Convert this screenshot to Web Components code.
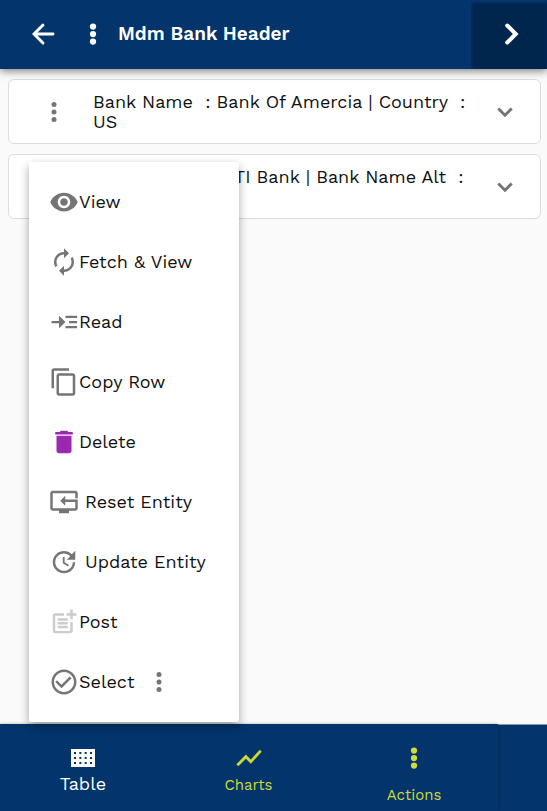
<!DOCTYPE html>
<html lang="en">
<head>
<meta charset="utf-8">
<meta name="viewport" content="width=device-width, initial-scale=1">
<title>Mdm Bank Header</title>
<style>
  html, body { margin: 0; }
  body { font-family: "Work Sans", Inter, "Noto Sans", sans-serif; font-size: 18px; font-weight: 400; line-height: 20px; color: #111; background: #fafafa; }
</style>
</head>
<body>
<bank-app></bank-app>
<script>
const icons = {
  dots: '<circle cx="12" cy="6" r="2"/><circle cx="12" cy="12" r="2"/><circle cx="12" cy="18" r="2"/>',
  boldDots: '<circle cx="12" cy="6" r="2.5"/><circle cx="12" cy="12" r="2.5"/><circle cx="12" cy="18" r="2.5"/>',
  back: '<path d="M20 12H5M12 4.8 4.8 12l7.2 7.2" fill="none" stroke="currentColor" stroke-width="2.3" stroke-linecap="round"/>',
  next: '<path d="M8.2 5.2 15 12l-6.8 6.8" fill="none" stroke="currentColor" stroke-width="3.2" stroke-linecap="round"/>',
  expand: '<path d="M16.59 8.3 12 12.9 7.41 8.3 5.8 9.9l6.2 6.2 6.2-6.2z"/>',
  view: '<path d="M12 4.5C7 4.5 2.73 7.61 1 12c1.73 4.39 6 7.5 11 7.5s9.27-3.11 11-7.5c-1.73-4.39-6-7.5-11-7.5zM12 17c-2.76 0-5-2.24-5-5s2.24-5 5-5 5 2.24 5 5-2.24 5-5 5zm0-8c-1.66 0-3 1.34-3 3s1.34 3 3 3 3-1.34 3-3-1.34-3-3-3z"/>',
  fetch: '<path d="M12 6v3l4-4-4-4v3c-4.42 0-8 3.58-8 8 0 1.57.46 3.03 1.24 4.26L6.7 14.8c-.45-.83-.7-1.79-.7-2.8 0-3.31 2.69-6 6-6zm6.76 1.74L17.3 9.2c.44.84.7 1.79.7 2.8 0 3.31-2.69 6-6 6v-3l-4 4 4 4v-3c4.42 0 8-3.58 8-8 0-1.57-.46-3.03-1.24-4.26z"/>',
  read: '<path d="M2 11.1h6V7l5.2 5L8 17v-4.1H2zM13.2 7H22.5v1.8h-9.3zM16 11.1h6.5v1.8H16zM13.2 15.2h9.3V17h-9.3z"/>',
  copy: '<path d="M16 1H4c-1.1 0-2 .9-2 2v14h2V3h12V1zm3 4H8c-1.1 0-2 .9-2 2v14c0 1.1.9 2 2 2h11c1.1 0 2-.9 2-2V7c0-1.1-.9-2-2-2zm0 16H8V7h11v14z"/>',
  delete: '<path d="M6 19c0 1.1.9 2 2 2h8c1.1 0 2-.9 2-2V7H6v12zM19 4h-3.5l-1-1h-5l-1 1H5v2h14V4z"/>',
  reset: '<path d="M21 9h2V5c0-1.1-.9-2-2-2H3c-1.1 0-2 .9-2 2v12c0 1.1.9 2 2 2h5v2h8v-2h5c1.1 0 2-.9 2-2v-7H13V7l-4 4 4 4v-3h8v5H3V5h18z"/>',
  update: '<path d="M21 10.12h-6.78l2.74-2.82c-2.73-2.7-7.15-2.8-9.88-.1-2.73 2.71-2.73 7.08 0 9.79s7.15 2.71 9.88 0C18.32 15.65 19 14.08 19 12.1h2c0 1.98-.88 4.55-2.64 6.29-3.51 3.48-9.21 3.48-12.72 0-3.5-3.47-3.53-9.11-.02-12.58s9.14-3.47 12.65 0L21 3v7.12zM12.5 8v4.25l3.5 2.08-.72 1.21L11 13V8h1.5z"/>',
  post: '<path d="M17 19.22H5V7h7V5H5c-1.1 0-2 .9-2 2v12c0 1.1.9 2 2 2h12c1.1 0 2-.9 2-2v-7h-2v7.22zM19 2h-2v3h-3v2h3v2.99h2V7h3V5h-3zM7 9h8v2H7zM7 12h8v2H7zM7 15h8v2H7z"/>',
  select: '<path d="M16.59 7.58 10 14.17l-3.59-3.58L5 12l5 5 8-8zM12 2C6.48 2 2 6.48 2 12s4.48 10 10 10 10-4.48 10-10S17.52 2 12 2zm0 18c-4.42 0-8-3.58-8-8s3.58-8 8-8 8 3.58 8 8-3.58 8-8 8z"/>',
  table: '<path fill-rule="evenodd" d="M2.4 4.8h19.2v14.4H2.4zM4.8 7.2v1.6h1.6V7.2zm4.27 0v1.6h1.6V7.2zm4.27 0v1.6h1.6V7.2zm4.26 0v1.6h1.6V7.2zM4.8 11.2v1.6h1.6v-1.6zm4.27 0v1.6h1.6v-1.6zm4.27 0v1.6h1.6v-1.6zm4.26 0v1.6h1.6v-1.6zM4.8 15.2v1.6h1.6v-1.6zm4.27 0v1.6h1.6v-1.6zm4.27 0v1.6h1.6v-1.6zm4.26 0v1.6h1.6v-1.6z"/>',
  charts: '<path d="m3.5 18.49 6-6.01 4 4L22 6.92l-1.41-1.41-7.09 7.97-4-4L2 16.99z" stroke="currentColor" stroke-width=".3"/>'
};
const define = (name, html, setup) => customElements.define(name, class extends HTMLElement {
  constructor() {
    super();
    const t = document.createElement('template');
    t.innerHTML = html;
    this.attachShadow({ mode: 'open' }).append(t.content.cloneNode(true));
  }
  connectedCallback() { if (setup) setup(this, this.shadowRoot); }
});
const buttonReset = 'button{font:inherit;color:inherit;background:none;border:0;padding:0;margin:0;cursor:pointer}';

define('app-icon', `<style>
  :host { display: block; flex: none; width: 30px; height: 30px; }
  svg { display: block; width: 100%; height: 100%; fill: currentColor; }
</style><svg viewBox="0 0 24 24" aria-hidden="true"></svg>`,
  (el, root) => { root.querySelector('svg').innerHTML = icons[el.getAttribute('name')]; });

define('app-header', `<style>${buttonReset}
  :host { display: flex; align-items: stretch; height: 69px; background: #03346b; color: #fff; box-shadow: 0 2px 8px rgba(0,0,0,.5); position: relative; z-index: 1; }
  .main { flex: 1; display: flex; align-items: center; gap: 20px; padding: 0 0 2px 28px; }
  h1 { margin: 0 0 0 -10px; font-size: 19px; line-height: 24px; font-weight: 600; }
  .next { width: 76px; display: grid; place-items: center; background: #01264d; box-shadow: inset 1px 1px 3px #03346b; margin-top: 2px; }
  .next app-icon { margin: 0 0 4px 6px; }
</style>
<div class="main">
  <button aria-label="Back"><app-icon name="back"></app-icon></button>
  <button aria-label="More"><app-icon name="boldDots"></app-icon></button>
  <h1><slot></slot></h1>
</div>
<button class="next" aria-label="Next"><app-icon name="next"></app-icon></button>`);

define('record-card', `<style>${buttonReset}
  :host { display: flex; align-items: center; box-sizing: border-box; min-height: 65px; padding: 11px 20px 11px 30px; background: #fff; border: 1px solid #dcdcdc; border-radius: 6px; }
  .more, .expand { color: #757575; }
  .text { flex: 1; align-self: flex-start; padding: 1px 12px 0 24px; white-space: pre-wrap; }
</style>
<button class="more" aria-label="Row actions"><app-icon name="dots"></app-icon></button>
<div class="text"><slot></slot></div>
<button class="expand" aria-label="Expand"><app-icon name="expand"></app-icon></button>`);

define('menu-item', `<style>${buttonReset}
  :host { display: flex; align-items: center; height: 60px; padding-left: 20px; }
  button { display: flex; align-items: center; text-align: left; }
  app-icon { color: #757575; }
  :host([tone=accent]) app-icon { color: #9c27b0; }
  :host([tone=muted]) app-icon { color: #ccc; }
  :host([spaced]) span { padding-left: 6px; }
</style><button><app-icon></app-icon><span><slot></slot></span></button><slot name="extra"></slot>`,
  (el, root) => {
    const icon = document.createElement('app-icon');
    icon.setAttribute('name', el.getAttribute('icon'));
    root.querySelector('app-icon').replaceWith(icon);
  });

define('action-menu', `<style>
  :host { display: block; box-sizing: border-box; width: 210px; padding: 10px 0; background: #fff; border-radius: 2px; box-shadow: 0 4px 10px rgba(0,0,0,.35); }
  .more { border: 0; padding: 0; margin-left: 10px; background: none; color: #757575; }
</style>
<menu-item icon="view">View</menu-item>
<menu-item icon="fetch">Fetch &amp; View</menu-item>
<menu-item icon="read">Read</menu-item>
<menu-item icon="copy">Copy Row</menu-item>
<menu-item icon="delete" tone="accent">Delete</menu-item>
<menu-item icon="reset" spaced>Reset Entity</menu-item>
<menu-item icon="update" spaced>Update Entity</menu-item>
<menu-item icon="post" tone="muted">Post</menu-item>
<menu-item icon="select">Select<button class="more" slot="extra" aria-label="More select options"><app-icon name="dots"></app-icon></button></menu-item>`);

define('nav-tab', `<style>${buttonReset}
  :host { display: block; flex: 1; color: #cddc39; font-size: 15px; }
  button { width: 100%; display: flex; flex-direction: column; align-items: center; padding-top: 19px; }
  span { padding-top: 2px; }
  :host([active]) { color: #fff; font-size: 18px; }
  :host([active]) span { padding-top: 1px; }
  :host([tall]) span { padding-top: 12px; }
</style><button><app-icon></app-icon><span><slot></slot></span></button>`,
  (el, root) => {
    const icon = document.createElement('app-icon');
    icon.setAttribute('name', el.getAttribute('icon'));
    root.querySelector('app-icon').replaceWith(icon);
  });

define('bottom-nav', `<style>
  :host { display: block; box-sizing: border-box; height: 87px; background: #03346b; border-top: 1px solid #7f98b4; }
  nav { display: flex; box-sizing: border-box; height: 87px; margin: -1px 49px 0 0; padding-right: 1px; background: #03346b; box-shadow: 0 0 3px rgba(0,0,0,.3); }
</style><nav>
<nav-tab icon="table" active>Table</nav-tab>
<nav-tab icon="charts">Charts</nav-tab>
<nav-tab icon="boldDots" tall>Actions</nav-tab>
</nav>`);

define('bank-app', `<style>
  :host { display: flex; flex-direction: column; min-height: 100vh; }
  main { flex: 1; position: relative; display: flex; flex-direction: column; gap: 10px; padding: 10px 6px 0 8px; }
  action-menu { position: absolute; z-index: 2; left: 29px; top: 93px; }
</style>
<app-header>Mdm Bank Header</app-header>
<main>
  <record-card>Bank Name  : Bank Of Amercia | Country  : US</record-card>
  <record-card>Bank Name  : CITI Bank | Bank Name Alt  :</record-card>
  <action-menu></action-menu>
</main>
<bottom-nav></bottom-nav>`);
</script>
</body>
</html>
